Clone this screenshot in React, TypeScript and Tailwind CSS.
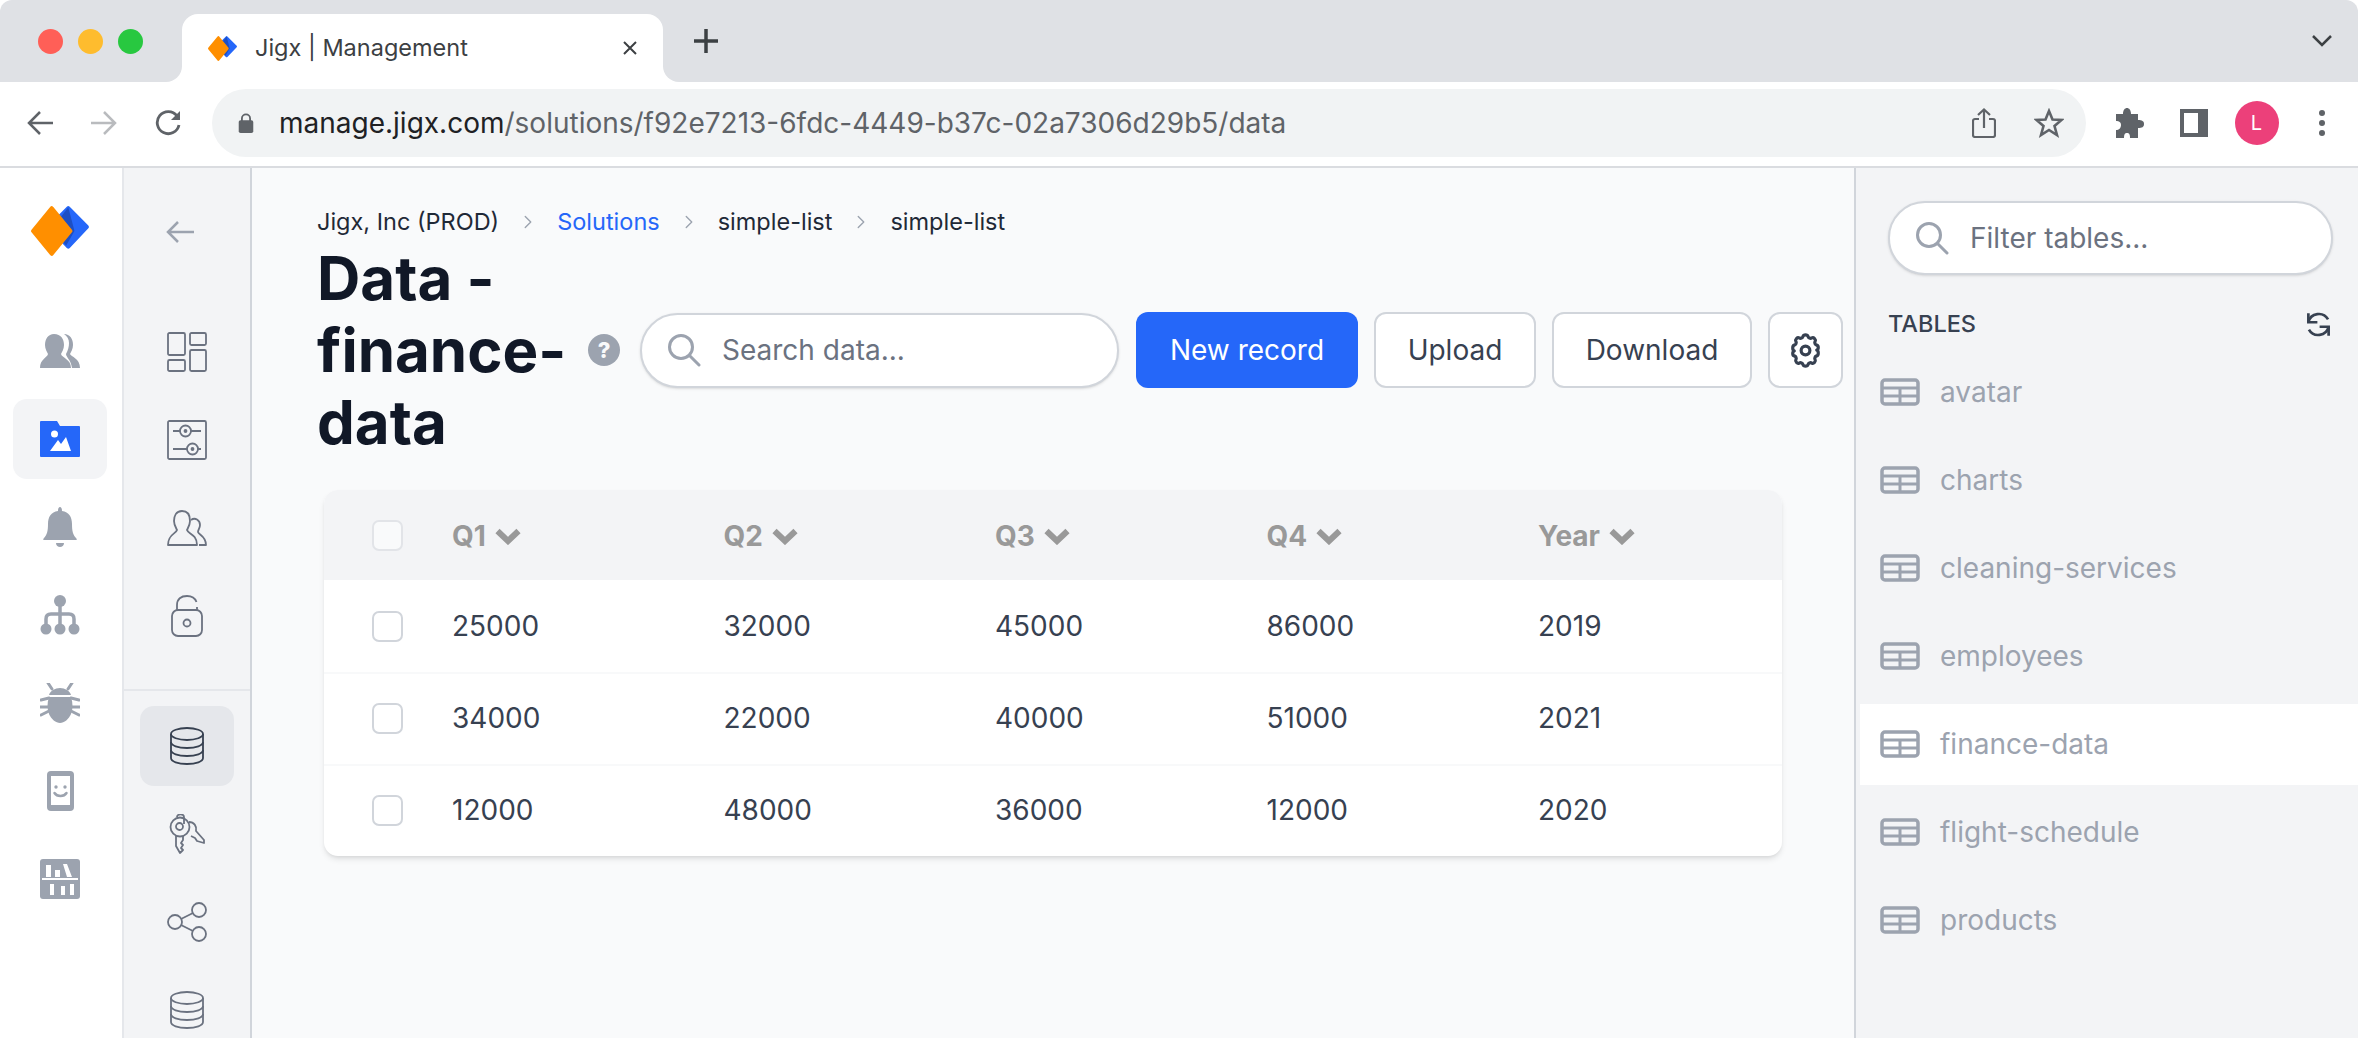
import { ChevronRight } from 'lucide-react';

const tables = ['avatar', 'charts', 'cleaning-services', 'employees', 'finance-data', 'flight-schedule', 'products'];
const columns = ['Q1', 'Q2', 'Q3', 'Q4', 'Year'];
const rows = [
    ['25000', '32000', '45000', '86000', '2019'],
    ['34000', '22000', '40000', '51000', '2021'],
    ['12000', '48000', '36000', '12000', '2020'],
];

function Logo({ className }: { className: string }) {
    return (
        <svg viewBox="0 0 60 52" className={className}>
            <path d="M38 4 L56 22 L38 41 L20 22 Z" fill="#2567f9" stroke="#2567f9" strokeWidth="4" strokeLinejoin="round" />
            <path d="M38 3 L44 26 L36 40 L22 24 Z" fill="#1d4fc4" />
            <path d="M22 4 L40 26 L22 48 L4 26 Z" fill="#ff8f00" stroke="#ff8f00" strokeWidth="4" strokeLinejoin="round" />
        </svg>
    );
}

function SearchIcon() {
    return (
        <svg viewBox="0 0 34 34" className="h-[34px] w-[34px] shrink-0" fill="none" stroke="#9ca3af" strokeWidth="3" strokeLinecap="round">
            <circle cx="14" cy="14" r="11.5" />
            <path d="M22.5 22.5 L32 32" />
        </svg>
    );
}

function Db({ color }: { color: string }) {
    return (
        <svg viewBox="0 0 36 38" className="h-[38px] w-[36px]" fill="none" stroke={color} strokeWidth="1.8">
            <ellipse cx="18" cy="7" rx="16" ry="6" />
            <path d="M2 7 V31 C2 34.5 9 37 18 37 C27 37 34 34.5 34 31 V7" />
            <path d="M2 15 C2 18.5 9 21 18 21 C27 21 34 18.5 34 15" />
            <path d="M2 23 C2 26.5 9 29 18 29 C27 29 34 26.5 34 23" />
        </svg>
    );
}

const line = '#6b7280';

const railOne = [
    <svg key="people" viewBox="0 0 40 36" className="h-[36px] w-[40px]" fill="#9ca3af">
        <path d="M24 1 C30 1 33 6 33 12 C33 16 31 19 30 21 C31 24 40 25 40 35 H32 C31 27 26 24 26 21 C28 17 29 14 29 10 C29 6 27 3 24 1 Z" />
        <path d="M14 1 C21 1 24 6 24 12 C24 16 22 19 21 21 C22 25 31 26 31 35 H0 C0 26 7 25 8 21 C7 19 5 16 5 12 C5 6 8 1 14 1 Z" />
    </svg>,
    <svg key="folder" viewBox="0 0 40 36" className="h-[36px] w-[40px]">
        <path d="M1 0 H17 L20 5 H39 A1 1 0 0 1 40 6 V35 A1 1 0 0 1 39 36 H1 A1 1 0 0 1 0 35 V1 A1 1 0 0 1 1 0 Z" fill="#2567f9" />
        <circle cx="14.500" cy="13" r="3.500" fill="#fff" />
        <path d="M10 30 L18 19 L21 23 L26 16 L31 30 Z" fill="#fff" />
    </svg>,
    <svg key="bell" viewBox="0 0 34 40" className="h-[40px] w-[34px]" fill="#9ca3af">
        <path d="M17 0 C18.500 0 19 2 19 4 C26 5 29 10 29 17 C29 24 30 28 33 31 C34 32 34 33 33 33 H1 C0 33 0 32 1 31 C4 28 5 24 5 17 C5 10 8 5 15 4 C15 2 15.500 0 17 0 Z" />
        <path d="M13 36 H21 C21 38.500 19 40 17 40 C15 40 13 38.500 13 36 Z" />
    </svg>,
    <svg key="org" viewBox="0 0 40 40" className="h-[40px] w-[40px]" fill="#9ca3af">
        <circle cx="20" cy="6" r="6" />
        <circle cx="6" cy="34" r="5.500" />
        <circle cx="20" cy="34" r="5.500" />
        <circle cx="34" cy="34" r="5.500" />
        <path d="M6 30 V24 C6 20 8 19 11 19 H29 C32 19 34 20 34 24 V30 M20 10 V30" fill="none" stroke="#9ca3af" strokeWidth="3.500" />
    </svg>,
    <svg key="bug" viewBox="0 0 40 40" className="h-[40px] w-[40px]" fill="#9ca3af">
        <path d="M9 12 C10 8 15 5 20 5 C25 5 30 8 31 12 Z" />
        <path d="M9 14 H31 C33 20 33 26 31 31 C29 36 24 40 20 40 C16 40 11 36 9 31 C7 26 7 20 9 14 Z" />
        <path d="M8 0 L12 6 M32 0 L28 6 M1 17 L9 15 M39 17 L31 15 M0 24 H8 M40 24 H32 M1 32 L9 28 M39 32 L31 28" fill="none" stroke="#9ca3af" strokeWidth="3" strokeLinecap="round" />
    </svg>,
    <svg key="phone" viewBox="0 0 27 40" className="h-[40px] w-[27px]">
        <rect width="27" height="40" rx="4" fill="#9ca3af" />
        <rect x="4" y="5" width="19" height="29" fill="#fff" />
        <circle cx="9" cy="16" r="1.700" fill="#9ca3af" />
        <circle cx="18" cy="16" r="1.700" fill="#9ca3af" />
        <path d="M7.500 22 C10 26 17 26 19.500 22" fill="none" stroke="#9ca3af" strokeWidth="2.500" strokeLinecap="round" />
    </svg>,
    <svg key="shelf" viewBox="0 0 40 40" className="h-[40px] w-[40px]">
        <rect width="40" height="40" rx="3" fill="#9ca3af" />
        <path d="M6 6 H11 V18 H6 Z M15 11 H20 V18 H15 Z M23 5 H27 L32 18 H27 Z M2 19 H38 V21 H2 Z M10 25 H14 V36 H10 Z M21 27 H25 V36 H21 Z M30 25 H34 V36 H30 Z" fill="#fff" />
    </svg>,
];

const railTwoTop = [
    <svg key="layout" viewBox="0 0 40 40" className="h-[40px] w-[40px]" fill="none" stroke={line} strokeWidth="1.800">
        <rect x="1" y="1" width="17" height="22" rx="1.500" />
        <rect x="23" y="1" width="16" height="12" rx="1.500" />
        <rect x="1" y="28" width="17" height="11" rx="1.500" />
        <rect x="23" y="18" width="16" height="21" rx="1.500" />
    </svg>,
    <svg key="sliders" viewBox="0 0 40 40" className="h-[40px] w-[40px]" fill="none" stroke={line} strokeWidth="1.800">
        <rect x="1" y="1" width="38" height="38" rx="1.500" />
        <path d="M6 11 H13 M24 11 H34 M6 29 H20 M31 29 H34" />
        <circle cx="18.500" cy="11" r="5.500" />
        <circle cx="25.500" cy="29" r="5.500" />
        <circle cx="18.500" cy="11" r="1" fill={line} />
        <circle cx="25.500" cy="29" r="1" fill={line} />
    </svg>,
    <svg key="users" viewBox="0 0 40 36" className="h-[36px] w-[40px]" fill="none" stroke={line} strokeWidth="1.800" strokeLinejoin="round">
        <path d="M15 1 C21 1 23 6 23 11 C23 15 21 18 20 20 C21 24 30 24 30 35 H1 C1 24 9 24 10 20 C9 18 7 15 7 11 C7 6 9 1 15 1 Z" />
        <path d="M24 10 C28 7 33 10 33 15 C33 18 31 20 31 22 C32 25 39 26 39 35 H32" />
    </svg>,
    <svg key="lock" viewBox="0 0 32 42" className="h-[42px] w-[32px]" fill="none" stroke={line} strokeWidth="1.800">
        <path d="M6 16 V10 C6 4 10 1 16 1 C20 1 24 3 25.500 7 M26 12 V16" />
        <rect x="1" y="15" width="30" height="26" rx="6" />
        <circle cx="16" cy="28" r="3.500" />
    </svg>,
];

const railTwoBottom = [
    <svg key="keys" viewBox="0 0 36 40" className="h-[40px] w-[36px]" fill="none" stroke={line} strokeWidth="1.800" strokeLinejoin="round">
        <circle cx="11" cy="13" r="9.500" />
        <circle cx="10.500" cy="12.500" r="3.500" />
        <path d="M8 3 V3 C8 -0.500 15 -0.500 15 3 V10" />
        <path d="M7 22 V32 L11 39 L14 36 L12 34 L14 31 L12 29 L14 26 V22" />
        <path d="M20 8 C25 8 28 12 27 17 L35 26 V29 L28 27 L26 24 L22 22" />
    </svg>,
    <svg key="share" viewBox="0 0 40 40" className="h-[40px] w-[40px]" fill="none" stroke={line} strokeWidth="1.800">
        <circle cx="32" cy="8" r="7" />
        <circle cx="8" cy="20" r="7" />
        <circle cx="32" cy="32" r="7" />
        <path d="M14 17 L26 11 M14 23 L26 29" />
    </svg>,
];

function TableIcon() {
    return (
        <svg viewBox="0 0 40 28" className="h-[28px] w-[40px] shrink-0" fill="none" stroke="#9ca3af" strokeWidth="3.500">
            <rect x="2" y="2" width="36" height="24" rx="3" />
            <path d="M3 10 H37 M3 18 H37 M20 10 V26" strokeWidth="3" />
        </svg>
    );
}

function Checkbox({ faint }: { faint?: boolean }) {
    return (
        <div className={`h-[31px] w-[31px] rounded-[7px] border-2 ${faint ? 'border-[#e2e4e8] bg-[#f9fafb]' : 'border-[#d1d5db] bg-white'}`} />
    );
}

export default function App() {
    return (
        <div className="flex h-[1038px] w-[2358px] flex-col overflow-hidden bg-white font-['Inter',sans-serif]">
            {/* browser tabs */}
            <div className="flex h-[82px] shrink-0 bg-white">
                <div className="flex h-full w-[182px] items-center gap-[15px] rounded-br-[16px] rounded-tl-[12px] bg-[#dfe1e5] pl-[38px]">
                    <div className="h-[25px] w-[25px] rounded-full bg-[#ff5f57]" />
                    <div className="h-[25px] w-[25px] rounded-full bg-[#febc2e]" />
                    <div className="h-[25px] w-[25px] rounded-full bg-[#28c840]" />
                </div>
                <div className="h-full bg-[#dfe1e5] pt-[14px]">
                    <div className="flex h-[68px] w-[481px] items-center rounded-t-[16px] bg-white pl-[25px]">
                        <Logo className="h-[27px] w-[31px]" />
                        <span className="ml-[17px] w-[367px] text-[23.5px] text-[#3c4043]">Jigx | Management</span>
                        <svg viewBox="0 0 16 16" className="h-[16px] w-[16px]" fill="none" stroke="#3c4043" strokeWidth="2">
                            <path d="M2 2 L14 14 M14 2 L2 14" />
                        </svg>
                    </div>
                </div>
                <div className="flex h-full flex-1 items-center justify-between rounded-bl-[16px] rounded-tr-[12px] bg-[#dfe1e5] pl-[31px] pr-[26px]">
                    <svg viewBox="0 0 24 24" className="h-[24px] w-[24px]" fill="none" stroke="#3c4043" strokeWidth="3.500">
                        <path d="M12 0 V24 M0 12 H24" />
                    </svg>
                    <svg viewBox="0 0 20 12" className="h-[12px] w-[20px]" fill="none" stroke="#3c4043" strokeWidth="2.500">
                        <path d="M1 1 L10 10 L19 1" />
                    </svg>
                </div>
            </div>

            {/* browser toolbar */}
            <div className="flex h-[86px] shrink-0 items-center border-b-2 border-[#dadce0] bg-white pb-[2px] pl-[8px]">
                <div className="flex w-[64px] justify-center">
                    <svg viewBox="0 0 26 24" className="h-[24px] w-[26px]" fill="none" stroke="#5f6368" strokeWidth="2.500">
                        <path d="M26 12 H3 M13 1 L2 12 L13 23" />
                    </svg>
                </div>
                <div className="flex w-[64px] justify-center">
                    <svg viewBox="0 0 26 24" className="h-[24px] w-[26px]" fill="none" stroke="#b9bbbe" strokeWidth="2.500">
                        <path d="M0 12 H23 M13 1 L24 12 L13 23" />
                    </svg>
                </div>
                <div className="flex w-[64px] justify-center">
                    <svg viewBox="0 0 26 26" className="h-[26px] w-[26px]" fill="none" stroke="#5f6368" strokeWidth="2.800">
                        <path d="M22 6 A11 11 0 1 0 24 15" />
                        <path d="M25 1 V10 H16 Z" fill="#5f6368" stroke="none" />
                    </svg>
                </div>
                <div className="ml-[12px] flex h-[68px] w-[1874px] items-center rounded-full bg-[#f1f3f4] pl-[26px] pr-[22px]">
                    <svg viewBox="0 0 16 22" className="h-[20px] w-[16px] shrink-0">
                        <path d="M3.500 9 V6 A4.500 4.500 0 0 1 12.500 6 V9" fill="none" stroke="#5f6368" strokeWidth="2" />
                        <rect y="8" width="16" height="14" rx="2" fill="#5f6368" />
                    </svg>
                    <div className="ml-[25px] flex-1 text-[28px] text-[#5f6368]">
                        <span className="text-[#202124]">manage.jigx.com</span>/solutions/f92e7213-6fdc-4449-b37c-02a7306d29b5/data
                    </div>
                    <svg viewBox="0 0 24 30" className="h-[30px] w-[24px]" fill="none" stroke="#5f6368" strokeWidth="2.200">
                        <path d="M7 11 H3 A2 2 0 0 0 1 13 V27 A2 2 0 0 0 3 29 H21 A2 2 0 0 0 23 27 V13 A2 2 0 0 0 21 11 H17 M12 20 V2 M6 7 L12 1.500 L18 7" />
                    </svg>
                    <svg viewBox="0 0 30 30" className="ml-[38px] h-[30px] w-[30px]" fill="none" stroke="#5f6368" strokeWidth="2.600" strokeLinejoin="miter">
                        <path d="M15 3 L18.500 11.500 L27.500 12 L20.500 18 L23 27 L15 22 L7 27 L9.500 18 L2.500 12 L11.500 11.500 Z" />
                    </svg>
                </div>
                <div className="ml-[12px] flex w-[64px] justify-center">
                    <svg viewBox="0 0 28 30" className="h-[30px] w-[28px]" fill="#5f6368">
                        <path d="M0 6 H7 C7 2 9 0 11 0 C13 0 15 2 15 6 H22 V12 C26 12 28 13 28 16 C28 19 26 20 22 20 V30 H14 C14 26 13 25 11 25 C9 25 8 26 8 30 H0 V22 C3 22 5 20 5 17 C5 14 3 13 0 13 Z" />
                    </svg>
                </div>
                <div className="flex w-[64px] justify-center">
                    <div className="h-[28px] w-[28px] border-[4px] border-r-[10px] border-[#5f6368] bg-white" />
                </div>
                <div className="flex w-[61px] justify-center">
                    <div className="flex h-[44px] w-[44px] items-center justify-center rounded-full bg-[#ec407a] text-[20px] text-white">L</div>
                </div>
                <div className="flex w-[70px] flex-col items-center gap-[4px]">
                    <div className="h-[6px] w-[6px] rounded-full bg-[#5f6368]" />
                    <div className="h-[6px] w-[6px] rounded-full bg-[#5f6368]" />
                    <div className="h-[6px] w-[6px] rounded-full bg-[#5f6368]" />
                </div>
            </div>

            <div className="flex min-h-0 flex-1">
                {/* primary rail */}
                <div className="flex w-[124px] shrink-0 flex-col items-center border-r-2 border-[#e5e7eb] bg-white pr-[2px]">
                    <div className="mb-[13px] flex h-[126px] shrink-0 items-center">
                        <Logo className="h-[54px] w-[62px]" />
                    </div>
                    {railOne.map((icon, i) => (
                        <div key={i} className="flex h-[88px] w-full shrink-0 items-center justify-center">
                            <div className={`flex h-[80px] w-[94px] items-center justify-center rounded-[14px] ${i === 1 ? 'bg-[#f3f4f6]' : ''}`}>{icon}</div>
                        </div>
                    ))}
                </div>

                {/* secondary rail */}
                <div className="flex w-[128px] shrink-0 flex-col items-center border-r-2 border-[#d1d5db] bg-[#f3f4f6]">
                    <div className="mb-[12px] mr-[14px] flex h-[128px] shrink-0 items-center">
                        <svg viewBox="0 0 28 22" className="h-[22px] w-[28px]" fill="none" stroke="#9ca3af" strokeWidth="2.500">
                            <path d="M28 11 H3 M12 1 L2 11 L12 21" />
                        </svg>
                    </div>
                    {railTwoTop.map((icon, i) => (
                        <div key={i} className="flex h-[88px] shrink-0 items-center justify-center">{icon}</div>
                    ))}
                    <div className="mt-[29px] mb-[11px] w-full shrink-0 border-t-2 border-[#e5e7eb]" />
                    <div className="flex h-[88px] shrink-0 items-center justify-center">
                        <div className="flex h-[80px] w-[94px] items-center justify-center rounded-[14px] bg-[#e5e7eb]">
                            <Db color="#374151" />
                        </div>
                    </div>
                    {railTwoBottom.map((icon, i) => (
                        <div key={i} className="flex h-[88px] shrink-0 items-center justify-center">{icon}</div>
                    ))}
                    <div className="flex h-[88px] shrink-0 items-center justify-center">
                        <Db color={line} />
                    </div>
                </div>

                {/* main */}
                <div className="min-w-0 flex-1 bg-[#f9fafb] pl-[65px] pt-[39px]">
                    <div className="flex h-[30px] items-center text-[23.5px] text-[#1f2937]">
                        <span>Jigx, Inc (PROD)</span>
                        <ChevronRight className="mx-[18px] h-[22px] w-[22px] text-[#9ca3af]" strokeWidth={1.500} />
                        <span className="text-[#2567f9]">Solutions</span>
                        <ChevronRight className="mx-[18px] h-[22px] w-[22px] text-[#9ca3af]" strokeWidth={1.500} />
                        <span>simple-list</span>
                        <ChevronRight className="mx-[18px] h-[22px] w-[22px] text-[#9ca3af]" strokeWidth={1.500} />
                        <span>simple-list</span>
                    </div>

                    <div className="mt-[5px] flex items-center">
                        <h1 className="w-[271px] shrink-0 text-[60px] font-bold leading-[72px] text-[#111827]">Data - finance-data</h1>
                        <div className="flex h-[32px] w-[32px] shrink-0 items-center justify-center rounded-full bg-[#9ca3af] text-[22px] font-extrabold text-[#f9fafb]">?</div>
                        <div className="ml-[20px] flex h-[75px] w-[479px] items-center rounded-full border-2 border-[#d1d5db] bg-white pl-[25px] shadow-sm">
                            <SearchIcon />
                            <span className="ml-[21px] text-[28px] text-[#6b7280]">Search data...</span>
                        </div>
                        <button className="ml-[17px] h-[76px] w-[222px] rounded-[12px] bg-[#2567f9] text-[28px] text-white">New record</button>
                        <button className="ml-[16px] h-[76px] w-[162px] rounded-[12px] border-2 border-[#d1d5db] bg-white text-[28px] text-[#374151]">Upload</button>
                        <button className="ml-[16px] h-[76px] w-[200px] rounded-[12px] border-2 border-[#d1d5db] bg-white text-[28px] text-[#374151]">Download</button>
                        <button className="ml-[16px] flex h-[76px] w-[75px] items-center justify-center rounded-[12px] border-2 border-[#d1d5db] bg-white">
                            <svg viewBox="0 0 24 24" className="h-[35px] w-[35px]" fill="none" stroke="#374151" strokeWidth="2.200" strokeLinejoin="round">
                                <path d="M10.300 2.300 C10.700 0.900 13.300 0.900 13.700 2.300 C14 3.400 15.300 4 16.300 3.400 C17.600 2.700 19.300 4.400 18.600 5.700 C18 6.700 18.600 8 19.700 8.300 C21.100 8.700 21.100 11.300 19.700 11.700 C21.100 12 21.100 15.300 19.700 15.700 C18.600 16 18 17.300 18.600 18.300 C19.300 19.600 17.600 21.300 16.300 20.600 C15.300 20 14 20.600 13.700 21.700 C13.300 23.100 10.700 23.100 10.300 21.700 C10 20.600 8.700 20 7.700 20.600 C6.400 21.300 4.700 19.600 5.400 18.300 C6 17.300 5.400 16 4.300 15.700 C2.900 15.300 2.900 12.700 4.300 12.300 C2.900 12 2.900 8.700 4.300 8.300 C5.400 8 6 6.700 5.400 5.700 C4.700 4.400 6.400 2.700 7.700 3.400 C8.700 4 10 3.400 10.300 2.300 Z" />
                                <circle cx="12" cy="12" r="3" />
                            </svg>
                        </button>
                    </div>

                    <div className="ml-[7px] mt-[32px] w-[1458px] overflow-hidden rounded-[14px] bg-white shadow-md">
                        <div className="grid h-[90px] grid-cols-[128px_repeat(5,271.5px)] items-center bg-[#f3f4f6] pt-[1px]">
                            <div className="pl-[48px]">
                                <Checkbox faint />
                            </div>
                            {columns.map((col) => (
                                <div key={col} className="flex items-center gap-[9px] text-[28px] font-bold text-[#999]">
                                    {col}
                                    <svg viewBox="0 0 26 18" className="h-[18px] w-[26px]" fill="none" stroke="#999" strokeWidth="6">
                                        <path d="M2.500 4 L13 14 L23.500 4" />
                                    </svg>
                                </div>
                            ))}
                        </div>
                        {rows.map((row, i) => (
                            <div key={i} className={`grid h-[92px] grid-cols-[128px_repeat(5,271.5px)] items-center text-[28px] text-[#374151] ${i > 0 ? 'border-t-2 border-[#f8f9fa] pb-[2px]' : ''}`}>
                                <div className="pl-[48px]">
                                    <Checkbox />
                                </div>
                                {row.map((value, j) => (
                                    <div key={j}>{value}</div>
                                ))}
                            </div>
                        ))}
                    </div>
                </div>

                {/* tables panel */}
                <div className="flex w-[504px] shrink-0 flex-col border-l-2 border-[#d1d5db] bg-[#f3f4f6] pt-[33px]">
                    <div className="ml-[32px] flex h-[74px] w-[445px] shrink-0 items-center rounded-full border-2 border-[#d1d5db] bg-white pl-[25px] shadow-sm">
                        <SearchIcon />
                        <span className="ml-[21px] text-[28px] text-[#6b7280]">Filter tables...</span>
                    </div>
                    <div className="mb-[6px] ml-[32px] mt-[31px] flex h-[36px] w-[444px] shrink-0 items-center justify-between">
                        <span className="text-[23.5px] font-medium text-[#374151]">TABLES</span>
                        <svg viewBox="0 0 24 24" className="h-[27px] w-[27px]" fill="none" stroke="#374151" strokeWidth="2.400">
                            <path d="M3 10 A9.500 9.500 0 0 1 20.500 7.500 M21 14 A9.500 9.500 0 0 1 3.500 16.500" />
                            <path d="M3 2 V10 H11 M21 22 V14 H13" />
                        </svg>
                    </div>
                    {tables.map((name) => (
                        <div key={name} className="ml-[4px] flex h-[88px] shrink-0 items-center">
                            <div className={`flex h-[81px] w-full items-center gap-[20px] pl-[20px] text-[28px] text-[#9ca3af] ${name === 'finance-data' ? 'bg-white' : ''}`}>
                                <TableIcon />
                                {name}
                            </div>
                        </div>
                    ))}
                </div>
            </div>
        </div>
    );
}
